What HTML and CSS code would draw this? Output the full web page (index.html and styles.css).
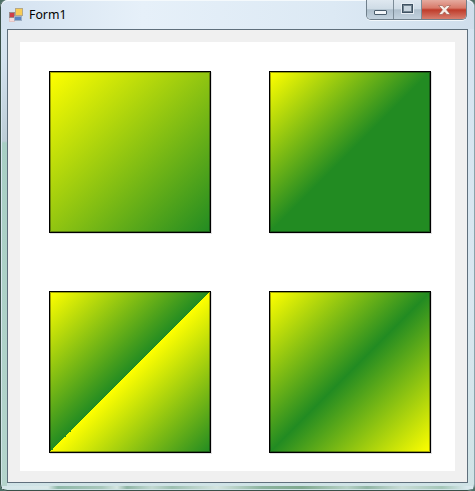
FILE: index.html
```html
<!DOCTYPE html>
<html>
<head>
  <title>Form1</title>
  <meta charset="UTF-8">
  <link rel="stylesheet" href="styles.css">
</head>
<body>
  <div class="window">
    <div class="titlebar">
      <svg class="app-icon" width="14" height="14" viewBox="0 0 14 14">
        <rect x="0.5" y="9.5" width="5" height="4" fill="#f5dcdc" stroke="#e3c6c6"/>
        <rect x="0.5" y="4.5" width="5" height="5" fill="#cf3f48" stroke="#9c8a8a"/>
        <rect x="6.5" y="0.5" width="7" height="7" fill="#f8cc55" stroke="#b5a888"/>
        <rect x="5.5" y="8.5" width="7" height="4" fill="#5b86c4" stroke="#9fb0c4"/>
      </svg>
      <span class="title-text">Form1</span>
      <div class="caption-buttons">
        <div class="caption-btn btn-min"><span class="min-glyph"></span></div>
        <div class="caption-btn btn-max"><span class="max-glyph"></span></div>
        <div class="caption-btn btn-close">
          <svg width="13" height="10" viewBox="0 0 13 10">
            <path d="M0.6 0.5h3.6l2.3 2.3 2.3-2.3h3.6l-3.9 4.3 3.9 4.7h-3.6l-2.3-2.6-2.3 2.6h-3.6l3.9-4.7z" fill="#f7efe9" stroke="#93574c" stroke-width="0.6"/>
          </svg>
        </div>
      </div>
    </div>
    <div class="client">
      <div class="panel">
        <div class="swatch swatch-linear"></div>
        <div class="swatch swatch-half"></div>
        <div class="swatch swatch-split"></div>
        <div class="swatch swatch-triangle"></div>
      </div>
    </div>
    <div class="frame-bottom"></div>
  </div>
</body>
</html>
```

FILE: styles.css
```css
html, body {
  margin: 0;
  padding: 0;
}

body {
  width: 475px;
  height: 491px;
  overflow: hidden;
  background: #4e6f66;
}

.window {
  box-sizing: border-box;
  width: 475px;
  height: 491px;
  padding: 0 7px;
  border-radius: 7px;
  background:
    linear-gradient(to bottom, #dbe8f3 0, #d3e2ee 60px, #bccdd6 141px, #a8cfc4 143px, #b4d4cc 491px) 2px 0 / 5px 100% no-repeat,
    linear-gradient(to bottom, #d5e4f1 0, #d9e7f0 60%, #cfe3e6 100%);
  box-shadow: inset 1px 0 0 #3a5049, inset -1px 0 0 #8aa3ab, inset 0 -1px 0 #3a5049;
}

/* caption */
.titlebar {
  display: flex;
  align-items: flex-start;
  height: 29px;
  margin: 0 -6px;
  padding: 0 6px;
  border-radius: 7px 7px 0 0;
  background: linear-gradient(to right, #d4e2f0 0, #e6f0f9 30%, #dce9f4 70%, #cfdeec 100%);
  box-shadow: inset 0 1px 0 #f4f9fc;
  font-family: "Noto Sans", "Open Sans", sans-serif;
  font-size: 12.3px;
  color: #000;
}

.app-icon {
  margin: 8px 0 0 2px;
}

.title-text {
  margin: 7px 0 0 6px;
  line-height: 16px;
}

.caption-buttons {
  display: flex;
  height: 19px;
  margin: 0 1px 0 auto;
  border: 1px solid #6f7f8b;
  border-top: none;
  border-radius: 0 0 5px 5px;
  overflow: hidden;
  box-shadow: 0 1px 0 #f2f7fb;
}

.caption-btn {
  display: flex;
  align-items: center;
  justify-content: center;
  height: 19px;
}

.btn-min,
.btn-max {
  background: linear-gradient(to bottom, #dfe8f0 0, #cfdce6 45%, #aebfcc 52%, #c2d2de 100%);
  border-right: 1px solid #7c8c97;
}

.btn-min {
  width: 26px;
}

.btn-max {
  width: 27px;
}

.btn-close {
  width: 44px;
  background: linear-gradient(to bottom, #e5ab9f 0, #d87a6a 42%, #bf3c2b 52%, #d77f6f 100%);
}

.min-glyph {
  display: block;
  width: 11px;
  height: 3px;
  margin-top: 6px;
  background: #f2f6f9;
  border: 1px solid #4a5d6c;
  border-radius: 1px;
}

.max-glyph {
  display: block;
  box-sizing: border-box;
  width: 11px;
  height: 9px;
  margin-top: -2px;
  background: #c9d6e0;
  border: 1px solid #3f5262;
  box-shadow: 0 0 0 1px #e6edf3, inset 0 0 0 1px #71838f;
}

/* client area */
.client {
  box-sizing: border-box;
  height: 454px;
  padding: 12px 12px 11px;
  background: #f0f0f0;
  border: 1px solid #5f6f7c;
}

.panel {
  display: grid;
  grid-template-columns: 162px 162px;
  grid-auto-rows: 162px;
  gap: 58px;
  box-sizing: border-box;
  height: 429px;
  padding: 29px 0 0 29px;
  background: #fff;
}

.frame-bottom {
  height: 3px;
  margin: 3px -5px 0;
  background: linear-gradient(to right, #d4e6ea 0, #d8e8e8 46px, #8fb8a8 56px, #a9c8bc 100px, #d5e6e2 115px, #8fb5a5 125px, #c2d9d2 150px, #9cbfb0 170px, #d3e4e0 215px, #8cb49f 260px, #7fa98f 300px, #b7d2c7 345px, #90b5a4 365px, #c9ddd7 400px, #a4c6b8 440px, #d9e9ee 465px);
}

/* gradient squares */
.swatch {
  box-sizing: border-box;
  border: 1px solid #000;
  box-shadow: inset 0 0 0 1px rgba(0, 0, 0, 0.35), 1px 1px 0 rgba(0, 0, 0, 0.12);
}

.swatch-linear {
  background: linear-gradient(135deg, #ffff00 0, #228b22 100%);
}

.swatch-half {
  background: linear-gradient(135deg, #ffff00 0, #228b22 50%);
}

.swatch-split {
  background: linear-gradient(135deg, #ffff00 0, #228b22 50%, #ffff00 50%, #228b22 100%);
}

.swatch-triangle {
  background: linear-gradient(135deg, #ffff00 0, #228b22 50%, #ffff00 100%);
}
```
